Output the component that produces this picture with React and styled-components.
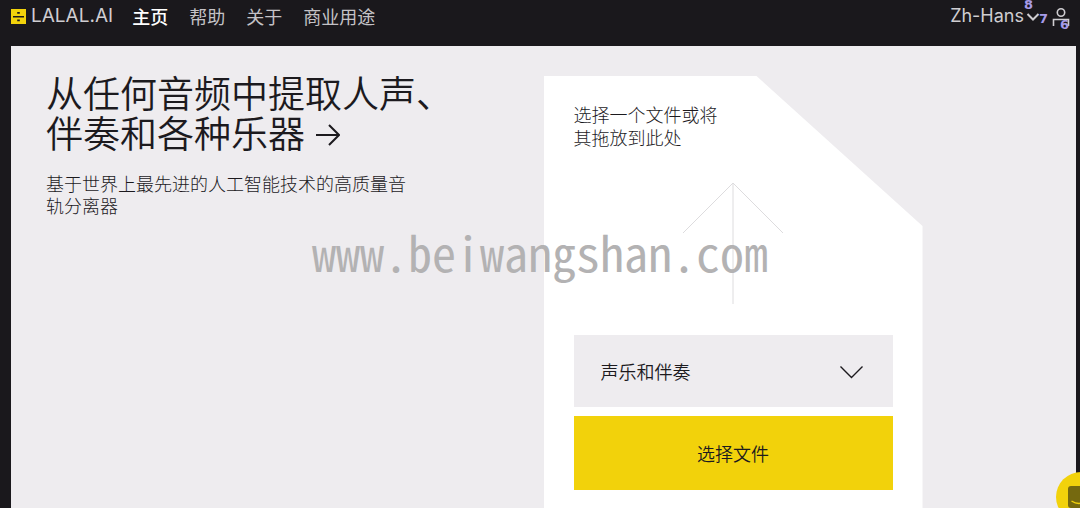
import React from "react";
import styled, { createGlobalStyle } from "styled-components";

const Global = createGlobalStyle`
  *, *::before, *::after { box-sizing: border-box; }
  body {
    margin: 0;
    background: #1a181c;
    color: #1c1a1e;
    font-family: "Noto Sans CJK SC", sans-serif;
    font-size: 18px;
  }
`;

const Page = styled.div`
  position: relative;
  min-height: 100vh;
  display: flex;
  flex-direction: column;
`;

const Header = styled.header`
  display: flex;
  align-items: center;
  justify-content: space-between;
  height: 46px;
  padding: 0 10px 14px 11px;
`;

const Nav = styled.nav`
  display: flex;
  align-items: center;
  gap: 21px;
`;

const Logo = styled.a`
  display: flex;
  align-items: center;
  gap: 5px;
  margin-right: -2px;
  color: #cfcdd1;
  font-family: Inter, sans-serif;
  font-size: 19px;
  line-height: 24px;
  text-decoration: none;
`;

const NavLink = styled.a`
  color: ${(p) => (p.$active ? "#ffffff" : "#c4c2c6")};
  font-weight: ${(p) => (p.$active ? 500 : 400)};
  line-height: 24px;
  text-decoration: none;
`;

const Tools = styled.div`
  position: relative;
  display: flex;
  align-items: center;
  gap: 12px;
`;

const IconButton = styled.button`
  display: flex;
  align-items: center;
  gap: 2px;
  padding: 0;
  border: 0;
  background: none;
  color: #cfcdd1;
  font-family: Inter, sans-serif;
  font-size: 18px;
  line-height: 24px;
  cursor: pointer;
`;

const Hint = styled.span`
  position: absolute;
  right: ${(p) => p.$right}px;
  top: ${(p) => p.$top}px;
  color: #a79be8;
  font-family: "DejaVu Sans", sans-serif;
  font-size: 13px;
  font-weight: 700;
  line-height: 10px;
`;

const Main = styled.main`
  flex: 1;
  display: grid;
  grid-template-columns: 1fr 1fr;
  margin: 0 4px 0 11px;
  background: #eeecef;
`;

const Intro = styled.section`
  padding: 26px 35px 0;
`;

const Title = styled.h1`
  margin: 0;
  font-size: 37px;
  font-weight: 350;
  line-height: 40px;
`;

const Lead = styled.p`
  max-width: 370px;
  margin: 20px 0 0;
  font-weight: 300;
  line-height: 22px;
`;

const Card = styled.section`
  display: flex;
  flex-direction: column;
  max-width: 379px;
  margin-top: 30px;
  padding: 27px 30px 18px;
  background: #ffffff;
  clip-path: polygon(0 0, 213px 0, 100% 150px, 100% 100%, 0 100%);
`;

const DropText = styled.p`
  max-width: 150px;
  margin: 0;
  font-weight: 300;
  line-height: 23px;
`;

const UpArrow = styled.svg`
  align-self: center;
  margin: 33px 0 31px;
`;

const SelectBox = styled.label`
  position: relative;
  display: block;
`;

const Select = styled.select`
  display: block;
  width: 100%;
  height: 72px;
  padding: 0 60px 0 27px;
  border: 0;
  border-radius: 0;
  appearance: none;
  background: #eeecef;
  color: #1c1a1e;
  font: inherit;
  font-weight: 350;
`;

const SelectArrow = styled.svg`
  position: absolute;
  right: 29px;
  top: 30px;
  pointer-events: none;
`;

const Upload = styled.button`
  height: 74px;
  margin-top: 9px;
  padding: 0;
  border: 0;
  background: #f2d20b;
  color: #1c1a1e;
  font: inherit;
  font-weight: 350;
  cursor: pointer;
`;

const Watermark = styled.div`
  position: absolute;
  inset: 0;
  display: flex;
  align-items: center;
  justify-content: center;
  padding-bottom: 6px;
  color: #b3b2b3;
  font-family: "Noto Sans Mono CJK SC", "DejaVu Sans Mono", monospace;
  font-size: 48px;
  line-height: 48px;
  pointer-events: none;
`;

const Chat = styled.button`
  position: fixed;
  right: -26px;
  bottom: -14px;
  width: 50px;
  height: 50px;
  padding: 0 0 0 12px;
  display: flex;
  align-items: center;
  border: 0;
  border-radius: 50%;
  background: #f2d20b;
  cursor: pointer;
`;

export default function App() {
  return (
    <Page>
      <Global />
      <Header>
        <Nav>
          <Logo href="#">
            <svg width="15" height="15" viewBox="0 0 15 15" aria-hidden="true">
              <path fill="#f2d20b" d="M0 0h15v15H0z" />
              <path fill="#1a181c" d="M2 7h11v1.4H2zM6.2 3h2.6v1.8H6.2zM6.2 10.5h2.6v1.8H6.2z" />
            </svg>
            LALAL.AI
          </Logo>
          <NavLink href="#" $active>主页</NavLink>
          <NavLink href="#">帮助</NavLink>
          <NavLink href="#">关于</NavLink>
          <NavLink href="#">商业用途</NavLink>
        </Nav>
        <Tools>
          <IconButton>
            Zh-Hans
            <svg width="14" height="10" viewBox="0 0 14 10" fill="none" stroke="currentColor" strokeWidth="2" aria-hidden="true">
              <path d="M1.5 3 7 8.500 12.500 3" />
            </svg>
          </IconButton>
          <IconButton aria-label="Account">
            <svg width="18" height="20" viewBox="0 0 18 20" fill="none" stroke="currentColor" strokeWidth="1.6" aria-hidden="true">
              <circle cx="9" cy="6.500" r="3.700" />
              <path d="M1.500 20v-6.500h15V20" />
            </svg>
          </IconButton>
          <Hint $right={37} $top={-4}>8</Hint>
          <Hint $right={22} $top={10}>7</Hint>
          <Hint $right={1} $top={16}>6</Hint>
        </Tools>
      </Header>
      <Main>
        <Intro>
          <Title>
            从任何音频中提取人声、<br />伴奏和各种乐器{" "}
            <svg width="27" height="24" viewBox="0 0 27 24" fill="none" stroke="currentColor" strokeWidth="2" aria-hidden="true">
              <path d="M3 11h23M16 1l10 10-10 10" />
            </svg>
          </Title>
          <Lead>基于世界上最先进的人工智能技术的高质量音轨分离器</Lead>
        </Intro>
        <Card>
          <DropText>选择一个文件或将其拖放到此处</DropText>
          <UpArrow width="102" height="122" viewBox="0 0 102 122" fill="none" stroke="#dddcde" aria-hidden="true">
            <path d="M51 1v121M1 51l50-50 50 50" />
          </UpArrow>
          <SelectBox>
            <Select aria-label="分离类型">
              <option>声乐和伴奏</option>
            </Select>
            <SelectArrow width="25" height="14" viewBox="0 0 25 14" fill="none" stroke="#1c1a1e" strokeWidth="1.4" aria-hidden="true">
              <path d="M1.5 1.5l11 11 11-11" />
            </SelectArrow>
          </SelectBox>
          <Upload>选择文件</Upload>
        </Card>
      </Main>
      <Watermark>www.beiwangshan.com</Watermark>
      <Chat aria-label="Chat">
        <svg width="22" height="22" viewBox="0 0 22 22" fill="none" aria-hidden="true">
          <rect width="22" height="22" rx="3" fill="#75690f" />
          <path d="M3.5 15q7.500 5 15 0" stroke="#f2d20b" strokeWidth="1.4" />
        </svg>
      </Chat>
    </Page>
  );
}
